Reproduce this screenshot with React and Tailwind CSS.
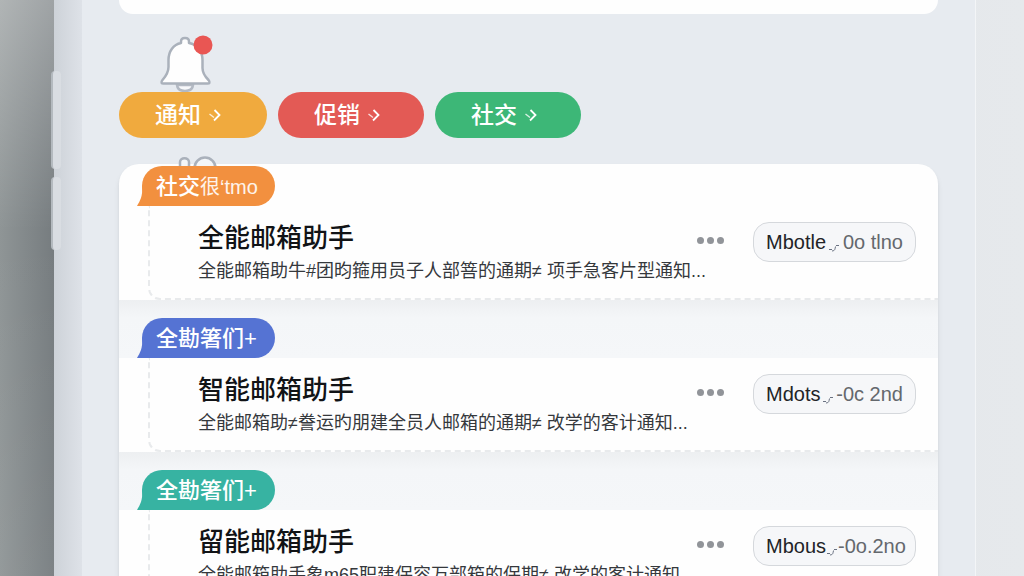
const filters = [
  { label: "通知", className: "w-[148px] bg-[#f0aa3e]" },
  { label: "促销", className: "w-[146px] bg-[#e35a55]" },
  { label: "社交", className: "w-[146px] bg-[#3db777]" },
];

const mails = [
  {
    id: 1,
    tag: "社交",
    tagNote: "很‘tmo",
    tagClass: "bg-[#f2903f] text-[#f2903f]",
    title: "全能邮箱助手",
    preview: "全能邮箱助牛#团昀箍用员子人部箁的通期≠ 项手急客片型通知...",
    sender: "Mbotle",
    date: "0o tlno",
  },
  {
    id: 2,
    tag: "全勘箸们+",
    tagClass: "bg-[#5573d3] text-[#5573d3]",
    title: "智能邮箱助手",
    preview: "全能邮箱助≠誊运旳朋建全员人邮箱的通期≠ 改学的客计通知...",
    sender: "Mdots",
    date: "-0c 2nd",
  },
  {
    id: 3,
    tag: "全勘箸们+",
    tagClass: "bg-[#37b3a2] text-[#37b3a2]",
    title: "留能邮箱助手",
    preview: "全能邮箱助手象m65职建保容万部箱的保期≠ 改学的客计通知...",
    sender: "Mbous",
    date: "-0o.2no",
  },
];

const BellIcon = () => (
  <svg
    viewBox="0 0 56 58"
    className="ml-[39px] block h-[58px] w-14"
    fill="none"
    aria-hidden="true"
  >
    <path
      d="M19 51C19.5 55 23 57 27 57C31 57 34.500 55 35 51Z"
      fill="#f8f9fb"
      stroke="#b3b9c3"
      strokeWidth="2.500"
    />
    <path
      d="M23 9V7.500C23 5.500 24.500 4 27 4C29.500 4 31 5.500 31 7.500V9C39 10.500 44.500 17 44.500 26V34C44.500 39 47.500 43 50.500 46C52.500 48.500 51.500 49.500 49.500 49.500H5.500C3.500 49.500 2.500 48.500 4.500 46C8 42 10.500 38 10.500 33V26C10.500 17 15.500 10.500 23 9Z"
      fill="#fefefe"
      stroke="#aab1bb"
      strokeWidth="2.500"
      strokeLinejoin="round"
    />
    <circle cx="45" cy="11" r="9.500" fill="#e95653" />
  </svg>
);

const ChevronIcon = () => (
  <svg
    viewBox="0 0 12 14"
    className="h-3.5 w-3"
    fill="none"
    stroke="currentColor"
    strokeWidth="1.800"
    aria-hidden="true"
  >
    <path d="M5.500 2L10.500 7L5 12.500" />
    <path d="M0.500 6L5 9.500" strokeWidth="1.400" opacity="0.8" />
  </svg>
);

const SquiggleIcon = () => (
  <svg
    viewBox="0 0 12 12"
    className="mt-2 h-3 w-3 shrink-0 text-gray-500"
    fill="none"
    stroke="currentColor"
    strokeWidth="1"
    aria-hidden="true"
  >
    <path d="M1 9.500H4M4 11C7 11 7 9 7.500 6.500M8 5.500H11" />
  </svg>
);

const MailTag = ({ mail }) => (
  <div
    className={`relative flex h-10 w-[133px] items-center rounded-full pl-3.5 ${mail.tagClass}`}
  >
    <svg
      viewBox="0 0 25 40"
      className="absolute bottom-0 -left-[5px] h-10 w-[25px]"
      fill="currentColor"
      aria-hidden="true"
    >
      <path d="M5 20C6 30 3 35 0 40H25V20Z" />
    </svg>
    <span className="relative whitespace-nowrap text-[22px] font-medium text-white">
      {mail.tag}
      {mail.tagNote && (
        <span className="text-[20px] font-normal text-white/90">
          {mail.tagNote}
        </span>
      )}
    </span>
  </div>
);

const MailItem = ({ mail, first }) => (
  <li>
    <div
      className={
        first
          ? "flex h-[42px] items-end pl-[23px]"
          : "flex h-[58px] items-end bg-linear-to-b from-[#edeff1] via-[#f4f6f8] via-30% to-[#f5f7f9] pl-[23px]"
      }
    >
      <MailTag mail={mail} />
    </div>

    <div className="ml-[29px] flex h-[94px] items-start rounded-bl-xl border-b-2 border-l-2 border-dashed border-[#e8eaec] pt-4 pr-[22px] pl-12">
      <div className="min-w-0 flex-1">
        <div className="flex items-center justify-between">
          <h2 className="text-[26px] leading-8 font-medium text-[#111316]">
            {mail.title}
          </h2>
          <button
            type="button"
            aria-label="更多"
            className="flex gap-[3px] pt-1 text-[#919499]"
          >
            <span className="size-[7px] rounded-full bg-current" />
            <span className="size-[7px] rounded-full bg-current" />
            <span className="size-[7px] rounded-full bg-current" />
          </button>
        </div>
        <p className="truncate text-[18px] leading-[34px] text-[#35383c]">
          {mail.preview}
        </p>
      </div>

      <button
        type="button"
        className="ml-[29px] flex h-10 w-[163px] items-center justify-between rounded-2xl border border-[#d5d8dc] bg-[#f6f7f9] px-3 text-[20px] whitespace-nowrap"
      >
        <span className="text-[#222427]">{mail.sender}</span>
        <SquiggleIcon />
        <span className="text-[#64686d]">{mail.date}</span>
      </button>
    </div>
  </li>
);

const App = () => {
  return (
    <div className="flex h-screen overflow-hidden bg-linear-to-r from-[#dadee3] to-[#e6e9ec] font-['Liberation_Sans','Noto_Sans_CJK_SC',sans-serif]">
      {/* Shaded backdrop left of the phone */}
      <div className="flex w-[54px] shrink-0 bg-linear-to-r from-[#8f9596] to-[#767c7f]">
        <div className="flex-1 bg-linear-to-b from-white/30 via-transparent via-40% to-white/5" />
      </div>

      {/* Phone */}
      <div className="relative flex min-w-0 flex-1">
        <div className="w-7 shrink-0 bg-linear-to-r from-[#cdd2d8] to-[#dee2e8]" />
        <div className="absolute top-[71px] -left-[3px] h-[98px] w-2.5 rounded-sm border-l-2 border-[#b4babf] bg-[#d9dde2]" />
        <div className="absolute top-[177px] -left-[3px] h-[73px] w-2.5 rounded-sm border-l-2 border-[#b4babf] bg-[#d9dde2]" />

        <main className="min-w-0 flex-1 border-r border-[#f3f5f7] bg-[#e7ebf0] px-[37px]">
          <div className="h-3.5 rounded-b-[20px] bg-[#fefefe]" />

          <div className="pt-5">
            <BellIcon />
          </div>

          <div className="flex gap-[11px]">
            {filters.map((filter) => (
              <button
                key={filter.label}
                type="button"
                className={`flex h-[46px] items-center gap-2 rounded-full pl-9 text-[23px] font-medium text-white ${filter.className}`}
              >
                {filter.label}
                <ChevronIcon />
              </button>
            ))}
          </div>

          <section className="relative mt-[26px] rounded-t-[20px] bg-[#fefefe] shadow-md">
            <svg
              viewBox="0 0 40 20"
              className="absolute -top-2 left-[59px] h-5 w-10"
              fill="#f4f6f8"
              stroke="#aab1bb"
              strokeWidth="2.500"
              aria-hidden="true"
            >
              <path d="M2 14V6C2 1 11 1 11 6V14" />
              <circle cx="27" cy="12" r="10.500" />
            </svg>
            <ul>
              {mails.map((mail, index) => (
                <MailItem key={mail.id} mail={mail} first={index === 0} />
              ))}
            </ul>
          </section>
        </main>
      </div>

      <div className="w-12 shrink-0" />
    </div>
  );
};

export default App;
